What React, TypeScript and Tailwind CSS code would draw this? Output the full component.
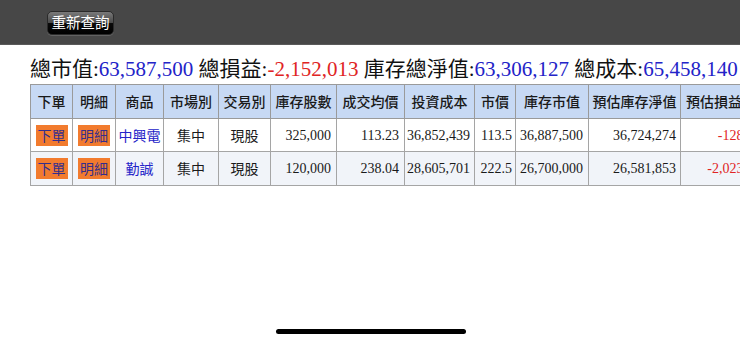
import React from "react";

type Row = {
  name: string;
  qty: string;
  avg: string;
  cost: string;
  price: string;
  mv: string;
  net: string;
  pl: string;
};

const rows: Row[] = [
  { name: "中興電", qty: "325,000", avg: "113.23", cost: "36,852,439", price: "113.5", mv: "36,887,500", net: "36,724,274", pl: "-128,165" },
  { name: "勤誠", qty: "120,000", avg: "238.04", cost: "28,605,701", price: "222.5", mv: "26,700,000", net: "26,581,853", pl: "-2,023,848" },
];

const SANS = "font-['Noto_Sans_CJK_TC','Noto_Sans',sans-serif]";
const SERIF = "font-['Liberation_Serif','Noto_Sans_CJK_TC',serif]";

const headers: { label: string; cls: string }[] = [
  { label: "下單", cls: "w-[42px] text-center" },
  { label: "明細", cls: "w-[43px] text-center" },
  { label: "商品", cls: "w-[48px] text-center" },
  { label: "市場別", cls: "w-[55px] text-center" },
  { label: "交易別", cls: "w-[52px] text-center" },
  { label: "庫存股數", cls: "w-[66px] text-center" },
  { label: "成交均價", cls: "w-[68px] text-center" },
  { label: "投資成本", cls: "w-[70px] text-center" },
  { label: "市價", cls: "w-[41px] text-center" },
  { label: "庫存市值", cls: "w-[73px] text-center" },
  { label: "預估庫存淨值", cls: "w-[92px] text-center" },
  { label: "預估損益", cls: "w-[100px] text-left pl-[5px]" },
];

function OrangeBtn({ label }: { label: string }) {
  return (
    <span className={`inline-block h-[21px] bg-[#f27b2e] px-[2px] text-[14px] leading-[21px] text-[#342e8c] ${SANS}`}>
      {label}
    </span>
  );
}

export default function App() {
  return (
    <div className="relative h-[342px] w-[740px] overflow-hidden bg-white">
      <div className="flex h-[45px] items-center border-b border-[#5a5a5a] bg-[#474747] pl-[47px] pt-[1px]">
        <button
          className={`flex h-[24px] w-[67px] items-center justify-center rounded-[5px] border border-[#2a2a2a] bg-[linear-gradient(to_bottom,#7a7a7a_0%,#4a4a4a_48%,#0a0a0a_52%,#000_100%)] text-[14.5px] leading-none text-white shadow-[0_1px_0_rgba(255,255,255,0.15)] ${SANS}`}
        >
          重新查詢
        </button>
      </div>

      <div className={`whitespace-nowrap pl-[30px] pt-[9px] text-[21px] leading-[26px] text-[#111] ${SERIF}`}>
        <span className={SANS}>總市值</span>:<span className="text-[#2323c8]">63,587,500</span>{" "}
        <span className={SANS}>總損益</span>:<span className="text-[#e02424]">-2,152,013</span>{" "}
        <span className={SANS}>庫存總淨值</span>:<span className="text-[#2323c8]">63,306,127</span>{" "}
        <span className={SANS}>總成本</span>:<span className="text-[#2323c8]">65,458,140</span>
      </div>

      <div className="pl-[30px] pt-[2px]">
        <table className="w-[750px] min-w-[750px] table-fixed border-collapse border border-[#8f8f8f] text-[14px]">
          <thead>
            <tr className="h-[34px] bg-[#c7d9f4]">
              {headers.map((h) => (
                <th
                  key={h.label}
                  className={`whitespace-nowrap border border-[#9a9a9a] px-0 font-medium text-[#1a1a1a] ${SANS} ${h.cls}`}
                >
                  {h.label}
                </th>
              ))}
            </tr>
          </thead>
          <tbody>
            {rows.map((r, i) => (
              <tr key={r.name} className={i === 0 ? "h-[33px] bg-white" : "h-[34px] bg-[#f1f4f9]"}>
                <td className="border border-[#a5a5a5] text-center">
                  <OrangeBtn label="下單" />
                </td>
                <td className="border border-[#a5a5a5] text-center">
                  <OrangeBtn label="明細" />
                </td>
                <td className={`border border-[#a5a5a5] text-center text-[#2323c8] ${SANS}`}>{r.name}</td>
                <td className={`border border-[#a5a5a5] text-center text-[#1a1a1a] ${SANS}`}>集中</td>
                <td className={`border border-[#a5a5a5] text-center text-[#1a1a1a] ${SANS}`}>現股</td>
                <td className={`border border-[#a5a5a5] pr-[5px] text-right text-[#1a1a1a] ${SERIF}`}>{r.qty}</td>
                <td className={`border border-[#a5a5a5] pr-[5px] text-right text-[#1a1a1a] ${SERIF}`}>{r.avg}</td>
                <td className={`border border-[#a5a5a5] pr-[4px] text-right text-[#1a1a1a] ${SERIF}`}>{r.cost}</td>
                <td className={`border border-[#a5a5a5] pr-[3px] text-right text-[#1a1a1a] ${SERIF}`}>{r.price}</td>
                <td className={`border border-[#a5a5a5] pr-[5px] text-right text-[#1a1a1a] ${SERIF}`}>{r.mv}</td>
                <td className={`border border-[#a5a5a5] pr-[4px] text-right text-[#1a1a1a] ${SERIF}`}>{r.net}</td>
                <td className={`border border-[#a5a5a5] pr-[12px] text-right text-[#e02424] ${SERIF}`}>{r.pl}</td>
              </tr>
            ))}
          </tbody>
        </table>
      </div>

      <div className="absolute left-[276px] top-[329px] h-[5px] w-[190px] rounded-full bg-black" />
    </div>
  );
}
